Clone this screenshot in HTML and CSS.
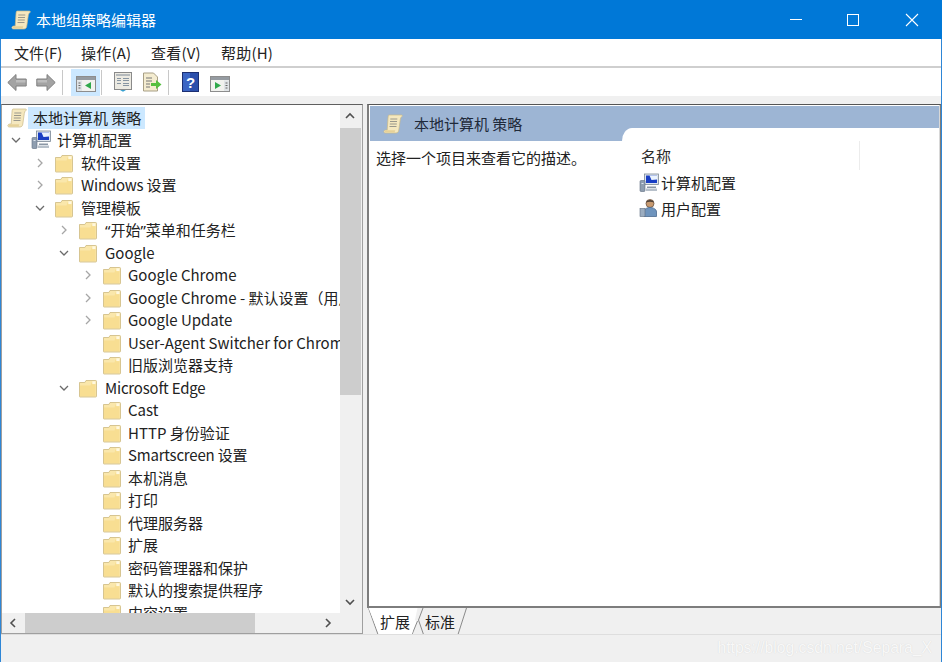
FILE: index.html
```html
<!DOCTYPE html>
<html lang="zh-CN">
<head>
<meta charset="utf-8">
<title>本地组策略编辑器</title>
<link rel="stylesheet" href="styles.css">
</head>
<body>
<svg class="defs" width="0" height="0">
  <symbol id="scroll" viewBox="0 0 20 20">
    <path d="M6 1h12.500c.8 0 1.200.8.500 1.400-.9.700-1.500 1.600-1.700 3L15.800 16c-.2 1.800-1.200 3-2.800 3H2.500C1.200 19 .5 18 1 17c.3-.6 1-1 1.800-1h1.400L5 4c.1-1.500.3-3 1-3z" fill="#f5e8bf" stroke="#c9b988" stroke-width=".7"/>
    <path d="M7.300 5h7M7 7.500h7M6.800 10h7M6.500 12.500h7" stroke="#9a988c" stroke-width="1"/>
    <path d="M2.500 16.300h10c-.8.700-.8 1.700-.3 2.300H2.500c-1 0-1-2.300 0-2.300z" fill="#e6d198"/>
  </symbol>
  <symbol id="folder" viewBox="0 0 20 20">
    <path d="M1.500 4.500h5.300l1.200-2h9.700c.5 0 .8.300.8.800v14.900c0 .5-.3.800-.8.800H2c-.3 0-.5-.2-.5-.5z" fill="#fae7ab" stroke="#cdb97f" stroke-width=".8"/>
    <path d="M2 7.500h10.500l1.200-3.200h3.800V18H2z" fill="#f8de92"/>
    <path d="M14.300 3.300h3.200v2.800h-3.200z" fill="#fff8e0"/>
  </symbol>
  <symbol id="computer" viewBox="0 0 20 20">
    <rect x="5.500" y="1" width="14" height="10.500" fill="#dfe6ee" stroke="#7a8794" stroke-width=".8"/>
    <path d="M7 2.500h11v7.500H7z" fill="#1a3fc4"/>
    <path d="M10.500 2.500l2 4.500 5.500-.5V2.500z" fill="#eaf3ff"/>
    <rect x="1" y="7.500" width="5" height="11" rx="1" fill="#8f9eb0" stroke="#5e6d80" stroke-width=".6"/>
    <path d="M8 13.500h9v1.500H8z" fill="#8b97a5"/>
    <path d="M2.500 10h2v1h-2z" fill="#dde5ee"/>
    <path d="M7 15.500h11V18H7z" fill="#b7c0ca"/>
  </symbol>
  <symbol id="user" viewBox="0 0 20 20">
    <circle cx="11" cy="5.500" r="4" fill="#c89a70" stroke="#6b5442" stroke-width=".8"/>
    <path d="M7 4.500c1-3.500 7-3.500 8 0-2.500-1-5.500-1-8 0z" fill="#4d4038"/>
    <path d="M5 18.500v-4.500c0-3 3-4.500 6-4.500s6.500 1.500 6.500 4.500v4.500z" fill="#6f94bd" stroke="#4d6b8f" stroke-width=".8"/>
    <rect x="1" y="10.500" width="5" height="8" fill="#9cadc0" stroke="#5e6d80" stroke-width=".6"/>
  </symbol>
  <symbol id="open" viewBox="0 0 10 10"><path d="M1 3l4 4 4-4" fill="none" stroke="#6b6b6b" stroke-width="1.300"/></symbol>
  <symbol id="closed" viewBox="0 0 10 10"><path d="M3 1l4 4-4 4" fill="none" stroke="#a6a6a6" stroke-width="1.300"/></symbol>
  <symbol id="up" viewBox="0 0 10 10"><path d="M1 7l4-4 4 4" fill="none" stroke="#505050" stroke-width="1.600"/></symbol>
  <symbol id="down" viewBox="0 0 10 10"><path d="M1 3l4 4 4-4" fill="none" stroke="#505050" stroke-width="1.600"/></symbol>
  <symbol id="left" viewBox="0 0 10 10"><path d="M7 1L3 5l4 4" fill="none" stroke="#505050" stroke-width="1.600"/></symbol>
  <symbol id="right" viewBox="0 0 10 10"><path d="M3 1l4 4-4 4" fill="none" stroke="#505050" stroke-width="1.600"/></symbol>
</svg>

<div class="window">
  <header class="titlebar">
    <svg class="title-icon"><use href="#scroll"/></svg>
    <span class="title-text">本地组策略编辑器</span>
    <div class="win-controls">
      <span class="win-btn"><svg width="14" height="14" viewBox="0 0 14 14"><path d="M1 6.500h12" stroke="#fff"/></svg></span>
      <span class="win-btn"><svg width="14" height="14" viewBox="0 0 14 14"><rect x="1.500" y="1.500" width="11" height="11" fill="none" stroke="#fff"/></svg></span>
      <span class="win-btn"><svg width="14" height="14" viewBox="0 0 14 14"><path d="M1 1l12 12M13 1L1 13" stroke="#fff" stroke-width="1.100"/></svg></span>
    </div>
  </header>

  <nav class="menubar">
    <span class="menu-item">文件(F)</span>
    <span class="menu-item">操作(A)</span>
    <span class="menu-item">查看(V)</span>
    <span class="menu-item">帮助(H)</span>
  </nav>

  <div class="toolbar">
    <svg class="tool nav-back" viewBox="0 0 20 19"><path d="M.8 9.500L9 1.500v4.500h10.200v7H9v4.500z" fill="#a3a3a3" stroke="#808080"/><path d="M9 7h9.500v2.500H9z" fill="#bdbdbd"/></svg>
    <svg class="tool nav-fwd" viewBox="0 0 20 19"><path d="M19.200 9.500L11 1.500v4.500H.8v7H11v4.500z" fill="#a3a3a3" stroke="#808080"/><path d="M1.500 7H11v2.500H1.500z" fill="#bdbdbd"/></svg>
    <i class="tool-sep"></i>
    <span class="tool-active">
      <svg class="tool pane-ico" viewBox="0 0 20 16"><rect x=".5" y=".5" width="19" height="15" fill="#f1f2ee" stroke="#8d8d8d"/><path d="M1 1h18v3H1z" fill="#959ba1"/><path d="M1 4.500h5V15H1z" fill="#dfe3e6"/><path d="M15 6v7l-6-3.500z" fill="#2fa84a"/><path d="M2.500 7h2M2.500 9.500h2M2.500 12h2" stroke="#666"/></svg>
    </span>
    <i class="tool-sep sep-tight"></i>
    <svg class="tool props" viewBox="0 0 18 20"><rect x=".5" y=".5" width="17" height="17" fill="#eceae2" stroke="#8a8a8a"/><path d="M2 2h14v2H2z" fill="#b5babd"/><path d="M3 6.500h4M9 6.500h6M9 8.500h6M3 11.500h4M9 11.500h6M9 13.500h6M3 8.500h4" stroke="#8795a2"/><path d="M6 18h6l-3 1.800z" fill="#37a0d0"/></svg>
    <svg class="tool export" viewBox="0 0 20 20"><path d="M1.500 1h10l4 4v14h-14z" fill="#f4ecd0" stroke="#a89f85"/><path d="M4 6h6M4 9h6M4 12h4M4 15h4" stroke="#777"/><path d="M9 11h5V8l5.500 4.500L14 17v-3H9z" fill="#56bf3f"/></svg>
    <i class="tool-sep sep-help"></i>
    <svg class="tool help" viewBox="0 0 17 20"><rect x=".5" y=".5" width="16" height="19" fill="#2b4fab" stroke="#1c2f72"/><path d="M1 1h7v18H1z" fill="#3c66c4"/><text class="help-q" x="8.500" y="15.500" text-anchor="middle">?</text></svg>
    <svg class="tool pane-ico" viewBox="0 0 20 16"><rect x=".5" y=".5" width="19" height="15" fill="#f1f2ee" stroke="#8d8d8d"/><path d="M1 1h18v3H1z" fill="#959ba1"/><path d="M14 4.500h5V15h-5z" fill="#dfe3e6"/><path d="M5 6v7l6-3.500z" fill="#2fa84a"/><path d="M15.500 7h2M15.500 9.500h2M15.500 12h2" stroke="#666"/></svg>
  </div>

  <main class="panes">
    <section class="tree-pane">
      <div class="tree-body">
        <div class="tree">
          <div class="row root"><svg class="ico"><use href="#scroll"/></svg><span class="label selected">本地计算机 策略</span></div>
          <div class="row l1"><svg class="arrow"><use href="#open"/></svg><svg class="ico"><use href="#computer"/></svg><span class="label">计算机配置</span></div>
          <div class="row l2"><svg class="arrow"><use href="#closed"/></svg><svg class="ico"><use href="#folder"/></svg><span class="label">软件设置</span></div>
          <div class="row l2"><svg class="arrow"><use href="#closed"/></svg><svg class="ico"><use href="#folder"/></svg><span class="label tight">Windows 设置</span></div>
          <div class="row l2"><svg class="arrow"><use href="#open"/></svg><svg class="ico"><use href="#folder"/></svg><span class="label">管理模板</span></div>
          <div class="row l3"><svg class="arrow"><use href="#closed"/></svg><svg class="ico"><use href="#folder"/></svg><span class="label"><span class="quote">“</span>开始<span class="quote">”</span>菜单和任务栏</span></div>
          <div class="row l3"><svg class="arrow"><use href="#open"/></svg><svg class="ico"><use href="#folder"/></svg><span class="label">Google</span></div>
          <div class="row l4"><svg class="arrow"><use href="#closed"/></svg><svg class="ico"><use href="#folder"/></svg><span class="label">Google Chrome</span></div>
          <div class="row l4"><svg class="arrow"><use href="#closed"/></svg><svg class="ico"><use href="#folder"/></svg><span class="label">Google Chrome - 默认设置（用户可覆盖）</span></div>
          <div class="row l4"><svg class="arrow"><use href="#closed"/></svg><svg class="ico"><use href="#folder"/></svg><span class="label">Google Update</span></div>
          <div class="row l4"><i class="arrow"></i><svg class="ico"><use href="#folder"/></svg><span class="label">User-Agent Switcher for Chrome</span></div>
          <div class="row l4"><i class="arrow"></i><svg class="ico"><use href="#folder"/></svg><span class="label">旧版浏览器支持</span></div>
          <div class="row l3"><svg class="arrow"><use href="#open"/></svg><svg class="ico"><use href="#folder"/></svg><span class="label tight">Microsoft Edge</span></div>
          <div class="row l4"><i class="arrow"></i><svg class="ico"><use href="#folder"/></svg><span class="label">Cast</span></div>
          <div class="row l4"><i class="arrow"></i><svg class="ico"><use href="#folder"/></svg><span class="label">HTTP 身份验证</span></div>
          <div class="row l4"><i class="arrow"></i><svg class="ico"><use href="#folder"/></svg><span class="label tight">Smartscreen 设置</span></div>
          <div class="row l4"><i class="arrow"></i><svg class="ico"><use href="#folder"/></svg><span class="label">本机消息</span></div>
          <div class="row l4"><i class="arrow"></i><svg class="ico"><use href="#folder"/></svg><span class="label">打印</span></div>
          <div class="row l4"><i class="arrow"></i><svg class="ico"><use href="#folder"/></svg><span class="label">代理服务器</span></div>
          <div class="row l4"><i class="arrow"></i><svg class="ico"><use href="#folder"/></svg><span class="label">扩展</span></div>
          <div class="row l4"><i class="arrow"></i><svg class="ico"><use href="#folder"/></svg><span class="label">密码管理器和保护</span></div>
          <div class="row l4"><i class="arrow"></i><svg class="ico"><use href="#folder"/></svg><span class="label">默认的搜索提供程序</span></div>
          <div class="row l4"><i class="arrow"></i><svg class="ico"><use href="#folder"/></svg><span class="label">内容设置</span></div>
        </div>
        <div class="vscroll">
          <svg class="sb-arrow"><use href="#up"/></svg>
          <div class="vtrack"><div class="vthumb"></div></div>
          <svg class="sb-arrow"><use href="#down"/></svg>
        </div>
      </div>
      <div class="hscroll">
        <svg class="sb-arrow"><use href="#left"/></svg>
        <div class="htrack"><div class="hthumb"></div></div>
        <svg class="sb-arrow"><use href="#right"/></svg>
      </div>
    </section>

    <section class="detail-pane">
      <div class="detail-frame">
        <div class="detail-head">
          <svg class="head-ico"><use href="#scroll"/></svg>
          <span class="head-text">本地计算机 策略</span>
          <i class="head-notch"></i>
        </div>
        <div class="detail-body">
          <p class="desc">选择一个项目来查看它的描述。</p>
          <div class="list">
            <div class="list-head">名称</div>
            <div class="list-row"><svg class="list-ico"><use href="#computer"/></svg><span>计算机配置</span></div>
            <div class="list-row"><svg class="list-ico"><use href="#user"/></svg><span>用户配置</span></div>
          </div>
        </div>
      </div>
      <div class="tabs">
        <span class="tab tab-first">
          <svg class="tab-shape" viewBox="0 0 50 27"><path d="M.5 0L10 26.500H44L49.500 13 " fill="#fff" stroke="#8a8a8a"/><path d="M.5 0H49.500L44 26H11z" fill="#fff"/></svg>
          <span class="tab-label">扩展</span>
        </span>
        <span class="tab tab-second">
          <svg class="tab-shape" viewBox="0 0 50 27"><path d="M5 0L.5 12l5 14.500H40L48.500 0" fill="#f0f0f0" stroke="#8a8a8a"/></svg>
          <span class="tab-label">标准</span>
        </span>
      </div>
    </section>
  </main>

  <footer class="statusbar"><span class="watermark">https://blog.csdn.net/Separa_X</span></footer>
</div>
</body>
</html>
```

FILE: styles.css
```css
* { box-sizing: border-box; }
html, body { margin: 0; height: 100%; }
body {
  width: 942px;
  height: 662px;
  overflow: hidden;
  font-family: "Noto Sans CJK SC", "Noto Sans", sans-serif;
  font-size: 15px;
  color: #222;
  background: #f0f0f0;
}
.defs { position: absolute; }
.window {
  height: 662px;
  display: flex;
  flex-direction: column;
  border-left: 1px solid #2e86d6;
  border-right: 1px solid #2e86d6;
}

/* title bar */
.titlebar {
  height: 39px;
  flex: none;
  margin: 0 -1px;
  background: #0078d7;
  display: flex;
  align-items: center;
  padding-left: 11px;
  color: #fff;
}
.title-icon { width: 20px; height: 20px; flex: none; }
.title-text { margin-left: 5px; font-size: 15px; }
.win-controls { margin-left: auto; display: flex; }
.win-btn {
  width: 60px;
  height: 39px;
  display: flex;
  align-items: center;
  justify-content: center;
}
.win-btn:nth-child(1) { margin-right: -3px; }
.win-btn:nth-child(2) { margin-right: -1px; }

/* menu */
.menubar {
  height: 27px;
  flex: none;
  background: #fff;
  display: flex;
  align-items: center;
  gap: 20px;
  padding-left: 13px;
}
.menu-item { line-height: 27px; width: 50px; letter-spacing: .2px; white-space: nowrap; }
.menu-item:first-child { width: 47px; letter-spacing: 0; }

/* toolbar */
.toolbar {
  height: 30px;
  flex: none;
  background: #fff;
  border-top: 2px solid #cfcfcf;
  display: flex;
  align-items: center;
  padding-left: 6px;
}
.tool { flex: none; }
.nav-back { width: 20px; height: 19px; margin-right: 9px; }
.nav-fwd { width: 20px; height: 19px; margin-right: 6px; }
.tool-sep { width: 1px; height: 25px; background: #c8c8c8; flex: none; margin-right: 8px; }
.tool-active {
  width: 29px;
  height: 27px;
  background: #cce8ff;
  display: flex;
  align-items: center;
  justify-content: center;
  flex: none;
  margin-right: 1px;
}
.pane-ico { width: 20px; height: 16px; margin-top: 3px; }
.sep-tight { margin-right: 12px; }
.props { width: 18px; height: 20px; margin-right: 10px; }
.export { width: 20px; height: 20px; margin-right: 6px; }
.sep-help { margin-right: 13px; }
.help { width: 17px; height: 20px; margin-right: 11px; }
.help-q { font: bold 15px "Liberation Sans", sans-serif; fill: #fff; }

/* panes */
.panes {
  flex: none;
  height: 538px;
  padding-top: 8px;
  display: flex;
  gap: 4px;
  background: #f0f0f0;
}
.tree-pane {
  width: 362px;
  flex: none;
  height: 530px;
  background: #fff;
  border: 1px solid #9f9f9f;
  border-top-color: #5f5f5f;
  display: flex;
  flex-direction: column;
}
.tree-body { flex: 1; min-height: 0; display: flex; }
.tree { width: 338px; flex: none; overflow: hidden; padding-top: 1.500px; }
.row {
  height: 22.500px;
  display: flex;
  align-items: center;
  white-space: nowrap;
}
.arrow { width: 10px; height: 10px; flex: none; }
.ico { width: 20px; height: 20px; flex: none; }
.label { margin-left: 6px; line-height: 22px; }
.tight { letter-spacing: -.2px; }
.quote { font-family: "Noto Sans", sans-serif; }
.root { padding-left: 5px; }
.root .label { margin-left: 1px; padding: 0 4px 0 5px; background: #cce8ff; }
.l1 { padding-left: 9px; }
.l1 .ico { margin-left: 10px; }
.l2 { padding-left: 33px; }
.l2 .ico { margin-left: 9px; }
.l2 .label { margin-left: 7px; }
.l3 { padding-left: 57px; }
.l3 .ico { margin-left: 9px; }
.l3 .label { margin-left: 7px; }
.l4 { padding-left: 81px; }
.l4 .ico { margin-left: 9px; }
.l4 .label { margin-left: 6px; }

.vscroll {
  width: 22px;
  flex: none;
  background: #f0f0f0;
  display: flex;
  flex-direction: column;
  padding-left: 5px;
}
.sb-arrow { width: 10px; height: 10px; flex: none; margin: 6px 0; }
.vtrack { flex: 1; width: 21px; margin: 1px 0 0 -5px; }
.vthumb { height: 267px; background: #cdcdcd; }
.hscroll {
  height: 20px;
  flex: none;
  display: flex;
  align-items: center;
  background: #f0f0f0;
}
.hscroll .sb-arrow { margin: 0 6px; }
.htrack { width: 292px; height: 20px; margin-left: 1px; }
.hthumb { width: 230px; height: 20px; background: #cdcdcd; }

/* detail */
.detail-pane {
  flex: 1;
  min-width: 0;
  height: 530px;
  display: flex;
  flex-direction: column;
}
.detail-frame {
  height: 504px;
  flex: none;
  background: #fff;
  border: 2px solid #7d7d7d;
  border-top-width: 1px;
  border-top-color: #555;
  border-right-width: 1px;
  box-shadow: inset -1px 0 0 #d8d8d8;
  display: flex;
  flex-direction: column;
}
.detail-head {
  height: 35px;
  flex: none;
  margin: 1px 1px 0 1px;
  background: #9db5d4;
  display: flex;
  align-items: center;
  padding-left: 13px;
  position: relative;
  color: #1f2a3a;
}
.head-ico { width: 20px; height: 20px; flex: none; }
.head-text { margin-left: 11px; }
.head-notch {
  position: absolute;
  left: 252px;
  right: 0;
  top: 22px;
  bottom: 0;
  background: #fff;
  border-top-left-radius: 10px 13px;
}
.detail-body { flex: 1; display: flex; }
.desc { margin: 6px 0 0 7px; line-height: 22px; width: 265px; }
.list { width: 219px; }
.list-head {
  height: 29px;
  line-height: 29px;
  border-right: 1px solid #ececec;
  color: #2c2c2c;
}
.list-row {
  height: 25.500px;
  display: flex;
  align-items: center;
  margin-left: -2px;
}
.list-ico { width: 20px; height: 20px; flex: none; margin-right: 2px; }

.tabs {
  flex: 1;
  display: flex;
  padding: 0 0 0 1px;
  gap: 0;
}
.tab { width: 50px; height: 27px; position: relative; }
.tab-shape { position: absolute; inset: 0; width: 50px; height: 27px; }
.tab-label { position: absolute; left: 12px; top: 2px; line-height: 24px; white-space: nowrap; }
.tab-second .tab-label { left: 7px; }

/* status */
.statusbar {
  flex: 1;
  border-top: 1px solid #dedede;
  background: #f0f0f0;
  position: relative;
}
.watermark {
  position: absolute;
  right: 9px;
  bottom: 5px;
  font: 15.700px "Liberation Sans", sans-serif;
  color: #f8f8f8;
  text-shadow: 0 0 1px #d2d2d2;
}
```
